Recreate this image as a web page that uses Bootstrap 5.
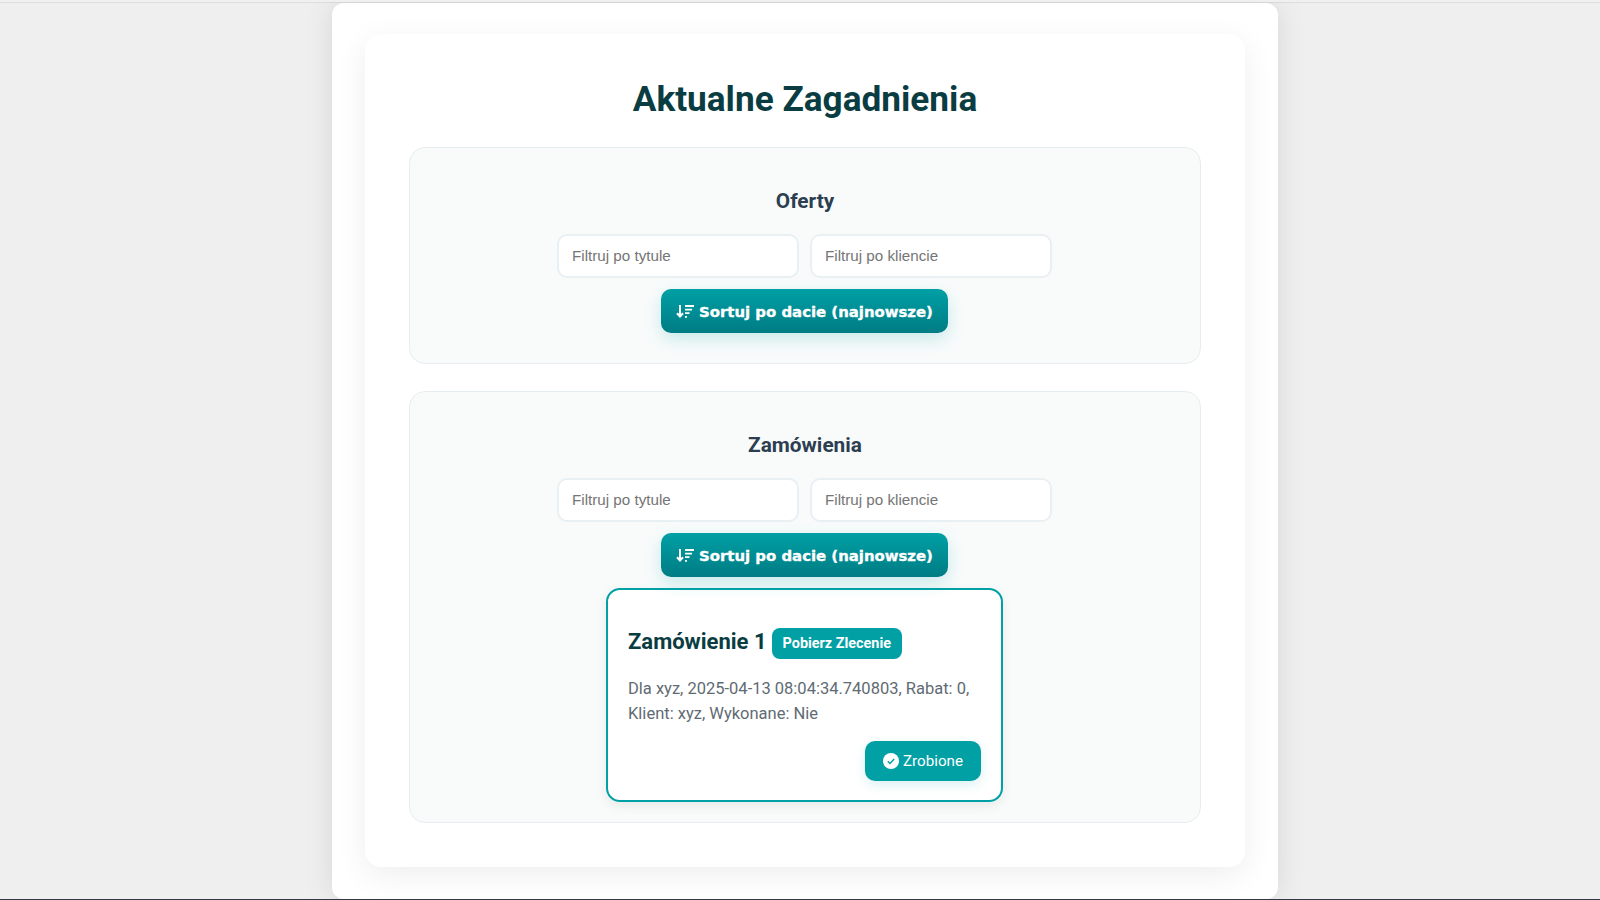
<!DOCTYPE html>
<html lang="pl">
<head>
<meta charset="utf-8">
<title>Aktualne Zagadnienia</title>
<link href="https://cdn.jsdelivr.net/npm/bootstrap@5.3.0/dist/css/bootstrap.min.css" rel="stylesheet">
<style>
html,body{height:900px;overflow:hidden}
body{background:#efefef;font-family:Roboto,sans-serif;border-top:2px solid #f0f0f0;border-bottom:1px solid #343a40;margin:0}
.top-rule{height:1px;background:#dedede}
.page-wrap{width:946px;margin:0 0 0 332px;padding:31px 33px 0;background:#fff;border-radius:12px;box-shadow:0 0 30px rgba(0,0,0,.1);height:896px}
.inner-panel{background:#fff;border-radius:16px;padding:44px 44px 44px;box-shadow:0 8px 32px rgba(0,0,0,.07)}
.main-title{font-family:Roboto,sans-serif;font-weight:700;font-size:35.2px;line-height:42px;color:#0a3d42;text-align:center;margin:0 0 27px}
.sect{background:#f9fbfb;border:1px solid #e6edf0;border-radius:16px;padding:41px 32px 30px}
.sect+.sect{margin-top:27px;padding-bottom:20px}
.sect-title{font-family:Roboto,sans-serif;font-weight:700;font-size:20.8px;line-height:24px;color:#2c3e50;text-align:center;margin:0 0 21px}
.filter-row{gap:11px;margin-bottom:11px;padding-right:1px}
.filter-input{width:242px;height:44px;border:2px solid #e8f0f3;border-radius:10px;padding:0 13px 2px;font-size:15.2px;font-family:"Liberation Sans",Arial,sans-serif;background:#fff}
.filter-input::placeholder{color:#757575}
.sort-row{padding-right:1px}
.sort-btn{height:44px;padding:0 15px;border:0;border-radius:10px;color:#fff;background:linear-gradient(180deg,#00a0a5,#007c84);font-family:"DejaVu Sans",sans-serif;font-weight:700;font-size:14.9px;box-shadow:0 6px 18px rgba(0,160,165,.2);gap:5px}
.sort-label{padding-top:2px;-webkit-text-stroke:.35px #fff}
.order-card{width:397px;background:#fff;border:2px solid #00a0a5;border-radius:14px;padding:36px 20px 19px;margin:11px 0 0 164px;box-shadow:0 4px 12px rgba(0,0,0,.07)}
.order-title{font-family:Roboto,sans-serif;font-weight:700;font-size:22px;line-height:31px;color:#0a3d42;margin:0}
.order-pill{background:#00a0a5;color:#fff;font-family:Roboto,sans-serif;font-weight:700;font-size:14.4px;height:31px;border-radius:8px;padding:1px 11px 0;display:inline-flex;align-items:center;margin:2px 0 0 5px}
.order-text{font-size:16.5px;line-height:25px;color:#5f6b73;margin:17px 0 15px}
.done-btn{background:#00a0a5;color:#fff;border:0;border-radius:10px;height:40px;padding:0 18px;font-size:15.2px;font-family:Roboto,sans-serif;box-shadow:0 4px 12px rgba(0,160,165,.15)}
</style>
</head>
<body>
<div class="top-rule"></div>
<div class="page-wrap">
  <div class="inner-panel">
    <h1 class="main-title">Aktualne Zagadnienia</h1>

    <section class="sect">
      <h2 class="sect-title">Oferty</h2>
      <div class="d-flex justify-content-center filter-row">
        <input class="filter-input" type="text" placeholder="Filtruj po tytule">
        <input class="filter-input" type="text" placeholder="Filtruj po kliencie">
      </div>
      <div class="d-flex justify-content-center sort-row">
        <button class="sort-btn d-inline-flex align-items-center" type="button">
          <svg width="18" height="13" viewBox="0 0 18 13" aria-hidden="true"><path d="M4 0v11.500M1 8.300l3 3.200 3-3.200" fill="none" stroke="#fff" stroke-width="2"/><path d="M9 1h9M9 4.600h7M9 8.200h4.500M9 11.800h2" fill="none" stroke="#fff" stroke-width="1.800"/></svg>
          <span class="sort-label">Sortuj po dacie (najnowsze)</span>
        </button>
      </div>
    </section>

    <section class="sect">
      <h2 class="sect-title">Zamówienia</h2>
      <div class="d-flex justify-content-center filter-row">
        <input class="filter-input" type="text" placeholder="Filtruj po tytule">
        <input class="filter-input" type="text" placeholder="Filtruj po kliencie">
      </div>
      <div class="d-flex justify-content-center sort-row">
        <button class="sort-btn d-inline-flex align-items-center" type="button">
          <svg width="18" height="13" viewBox="0 0 18 13" aria-hidden="true"><path d="M4 0v11.500M1 8.300l3 3.200 3-3.200" fill="none" stroke="#fff" stroke-width="2"/><path d="M9 1h9M9 4.600h7M9 8.200h4.500M9 11.800h2" fill="none" stroke="#fff" stroke-width="1.800"/></svg>
          <span class="sort-label">Sortuj po dacie (najnowsze)</span>
        </button>
      </div>
      <div class="order-card">
        <div class="d-flex align-items-start">
          <h3 class="order-title">Zamówienie 1</h3>
          <span class="order-pill">Pobierz Zlecenie</span>
        </div>
        <p class="order-text">Dla xyz, 2025-04-13 08:04:34.740803, Rabat: 0, Klient: xyz, Wykonane: Nie</p>
        <div class="d-flex justify-content-end">
          <button class="done-btn d-inline-flex align-items-center gap-1" type="button">
            <svg width="16" height="16" viewBox="0 0 16 16" aria-hidden="true"><circle cx="8" cy="8" r="8" fill="#fff"/><path d="M4.800 8.300l2.200 2.200 4.200-4.400" fill="none" stroke="#00a0a5" stroke-width="1.400"/></svg>
            <span>Zrobione</span>
          </button>
        </div>
      </div>
    </section>
  </div>
</div>
<script src="https://cdn.jsdelivr.net/npm/bootstrap@5.3.0/dist/js/bootstrap.bundle.min.js"></script>
</body>
</html>
